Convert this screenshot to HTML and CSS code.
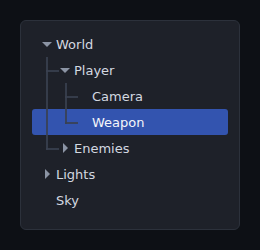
FILE: index.html
```html
<!DOCTYPE html>
<html lang="en">
<head>
    <meta charset="UTF-8">
    <title>Scene Tree</title>
    <link rel="stylesheet" href="styles.css">
</head>
<body>

<div class="panel">
    <ul class="tree">
        <li>
            <div class="row depth-0"><span class="toggle"><span class="caret open"></span></span><span class="label">World</span></div>
            <ul class="children depth-0">
                <li>
                    <div class="row depth-1"><span class="toggle"><span class="caret open"></span></span><span class="label">Player</span></div>
                    <ul class="children depth-1">
                        <li><div class="row depth-2"><span class="toggle"></span><span class="label">Camera</span></div></li>
                        <li><div class="row depth-2 selected"><span class="toggle"></span><span class="label">Weapon</span></div></li>
                    </ul>
                </li>
                <li>
                    <div class="row depth-1"><span class="toggle"><span class="caret closed"></span></span><span class="label">Enemies</span></div>
                </li>
            </ul>
        </li>
        <li>
            <div class="row depth-0"><span class="toggle"><span class="caret closed"></span></span><span class="label">Lights</span></div>
        </li>
        <li>
            <div class="row depth-0"><span class="toggle"></span><span class="label">Sky</span></div>
        </li>
    </ul>
</div>

</body>
</html>
```

FILE: styles.css
```css
body {
    margin: 0;
    background-color: #0d1015;
    font-family: 'DejaVu Sans', sans-serif;
}

/* Panel */
.panel {
    box-sizing: border-box;
    width: 220px;
    height: 210px;
    margin: 20px;
    padding: 10px 11px;
    background-color: #1e2129;
    border: 1px solid #2c313b;
    border-radius: 6px;
}

.tree,
.children {
    list-style: none;
    margin: 0;
    padding: 0;
}

/* Rows */
.row {
    position: relative;
    display: flex;
    align-items: center;
    gap: 2px;
    height: 26px;
    padding-left: 8px;
    border-radius: 3px;
    color: #d3d8e0;
    font-size: 13px;
}

.row.depth-1 { padding-left: 26px; }
.row.depth-2 { padding-left: 44px; }

.row.selected {
    background-color: #3354af;
    color: #f4f6fa;
}

.toggle {
    display: flex;
    justify-content: center;
    align-items: center;
    width: 14px;
    height: 14px;
}

.caret {
    width: 0;
    height: 0;
}

.caret.open {
    border-left: 5px solid transparent;
    border-right: 5px solid transparent;
    border-top: 5px solid #8b94a4;
}

.caret.closed {
    border-top: 5px solid transparent;
    border-bottom: 5px solid transparent;
    border-left: 5px solid #8b94a4;
}

/* Guide lines */
.children {
    position: relative;
}

.children::before {
    content: '';
    position: absolute;
    top: 0;
    bottom: 11px;
    width: 2px;
    background-color: rgba(58, 65, 80, 0.85);
    z-index: 1;
}

.children.depth-0::before { left: 14px; }
.children.depth-1::before { left: 33px; }

.row.depth-1::before,
.row.depth-2::before {
    content: '';
    position: absolute;
    top: 13px;
    width: 13px;
    height: 2px;
    background-color: rgba(58, 65, 80, 0.85);
}

.row.depth-1::before { left: 14px; }
.row.depth-2::before { left: 33px; }
```
